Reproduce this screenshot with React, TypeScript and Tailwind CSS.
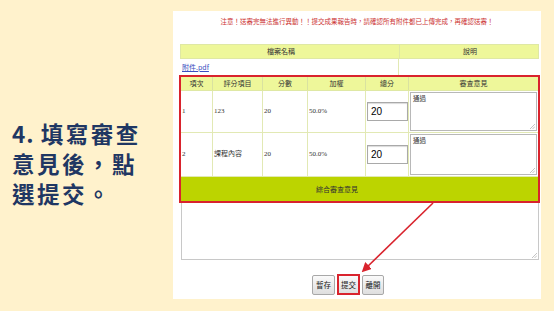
import React from 'react';

const cjk = "font-['Noto_Sans_CJK_TC','Noto_Sans',sans-serif]";
const serif = "font-['Liberation_Serif','Noto_Sans_CJK_TC',serif]";

const cols = 'grid grid-cols-[32px_50px_45px_58px_43px_129px]';

function ScoreRow({ no, item, h }: { no: string; item: string; h: string }) {
  return (
    <div className={`${cols} ${h} border-b border-[#e2e9b4] text-[7px] text-[#333]`}>
      <div className={`flex items-center pl-[1px] border-r border-[#e2e9b4] ${serif}`}>{no}</div>
      <div className={`flex items-center pl-[1px] border-r border-[#e2e9b4] ${serif}`}>{item}</div>
      <div className={`flex items-center pl-[1px] border-r border-[#e2e9b4] ${serif}`}>20</div>
      <div className={`flex items-center pl-[1px] border-r border-[#e2e9b4] ${serif}`}>50.0%</div>
      <div className="flex items-center pl-[1px] border-r border-[#e2e9b4]">
        <div className="w-[42px] h-[19px] border border-[#a9a9a9] shadow-[inset_0_1px_1px_rgba(0,0,0,0.15)] flex items-center pl-[3px] text-[10px] text-black font-['Liberation_Sans',sans-serif]">
          20
        </div>
      </div>
      <div className="p-[1px] flex">
        <div className={`relative flex-1 border border-[#b8b8b8] px-[2px] pt-[1px] text-[6.5px] ${cjk}`}>
          通過
          <svg className="absolute right-[1px] bottom-[1px]" width="5" height="5" viewBox="0 0 5 5">
            <path d="M5 0 L0 5 M5 2.5 L2.5 5" stroke="#aaa" strokeWidth="0.7" />
          </svg>
        </div>
      </div>
    </div>
  );
}

export default function App() {
  return (
    <div className="w-[554px] h-[311px] bg-[#fff2cc] flex overflow-hidden">
      <div className="w-[173px] pl-[12px] pt-[118px]">
        <p className={`text-[22.5px] leading-[30px] font-bold tracking-[2.5px] text-[#1f3763] ${cjk}`}>
          <span className="tracking-[1px]">4. </span>填寫審查
          <br />
          意見後，點
          <br />
          選提交。
        </p>
      </div>

      <div className="relative mt-[11px] w-[368px] h-[288px] bg-white">
        <div className={`h-[22px] flex items-center justify-center text-[6.5px] text-[#cc3333] ${cjk}`}>
          注意！送審完無法進行異動！！提交成果報告時，請確認所有附件都已上傳完成，再確認送審！
        </div>

        <div className={`ml-[7px] mt-[11px] w-[359px] text-[7px] text-[#333] ${cjk}`}>
          <div className="grid grid-cols-[219px_140px] h-[15px] bg-[#eef79a] border border-[#dfe8a4]">
            <div className="flex items-center justify-center pr-[18px] border-r border-[#dfe8a4]">檔案名稱</div>
            <div className="flex items-center justify-center">說明</div>
          </div>
          <div className="grid grid-cols-[219px_140px] h-[16px]">
            <div className="flex items-center pl-[2px] border-r border-[#e2e9b4]">
              <span className="text-[#3b4ec0] underline">附件.pdf</span>
            </div>
            <div />
          </div>
        </div>

        <div className={`ml-[6px] w-[361px] border-2 border-[#d9232d] ${cjk}`}>
          <div className={`${cols} h-[14px] bg-[#eef79a] text-[7px] text-[#333] border-b border-[#dfe8a4]`}>
            <div className="flex items-center justify-center border-r border-[#d9e2a0]">項次</div>
            <div className="flex items-center justify-center border-r border-[#d9e2a0]">評分項目</div>
            <div className="flex items-center justify-center border-r border-[#d9e2a0]">分數</div>
            <div className="flex items-center justify-center border-r border-[#d9e2a0]">加權</div>
            <div className="flex items-center justify-center border-r border-[#d9e2a0]">總分</div>
            <div className="flex items-center justify-center">審查意見</div>
          </div>
          <ScoreRow no="1" item="123" h="h-[42px]" />
          <ScoreRow no="2" item="課程內容" h="h-[44px]" />
          <div className="h-[24px] bg-[#bcd400] flex items-center justify-center pr-[45px] text-[7px] text-[#333]">
            綜合審查意見
          </div>
        </div>

        <div className="relative ml-[8px] w-[358px] h-[57px] border border-[#c8c8c8] border-t-0">
          <svg className="absolute right-[1px] bottom-[1px]" width="5" height="5" viewBox="0 0 5 5">
            <path d="M5 0 L0 5 M5 2.5 L2.5 5" stroke="#aaa" strokeWidth="0.7" />
          </svg>
        </div>

        <div className={`mt-[14px] ml-[139px] flex items-center gap-[2px] text-[7.5px] text-[#222] ${cjk}`}>
          <div className="w-[23px] h-[20px] flex items-center justify-center border border-[#a8a8a8] rounded-[2px] bg-gradient-to-b from-[#fafafa] to-[#dedede]">
            暫存
          </div>
          <div className="w-[23px] h-[21px] flex items-center justify-center border-2 border-[#d9232d] bg-gradient-to-b from-[#fafafa] to-[#dedede]">
            提交
          </div>
          <div className="w-[22px] h-[20px] flex items-center justify-center border border-[#a8a8a8] rounded-[2px] bg-gradient-to-b from-[#fafafa] to-[#dedede]">
            離開
          </div>
        </div>

        <svg className="absolute left-0 top-0" width="368" height="288" viewBox="0 0 368 288">
          <defs>
            <marker id="ah" markerWidth="6" markerHeight="6" refX="4" refY="3" orient="auto">
              <path d="M0,0 L6,3 L0,6 z" fill="#d9232d" />
            </marker>
          </defs>
          <line x1="260" y1="192" x2="191" y2="259" stroke="#d9232d" strokeWidth="1.6" markerEnd="url(#ah)" />
        </svg>
      </div>
    </div>
  );
}
